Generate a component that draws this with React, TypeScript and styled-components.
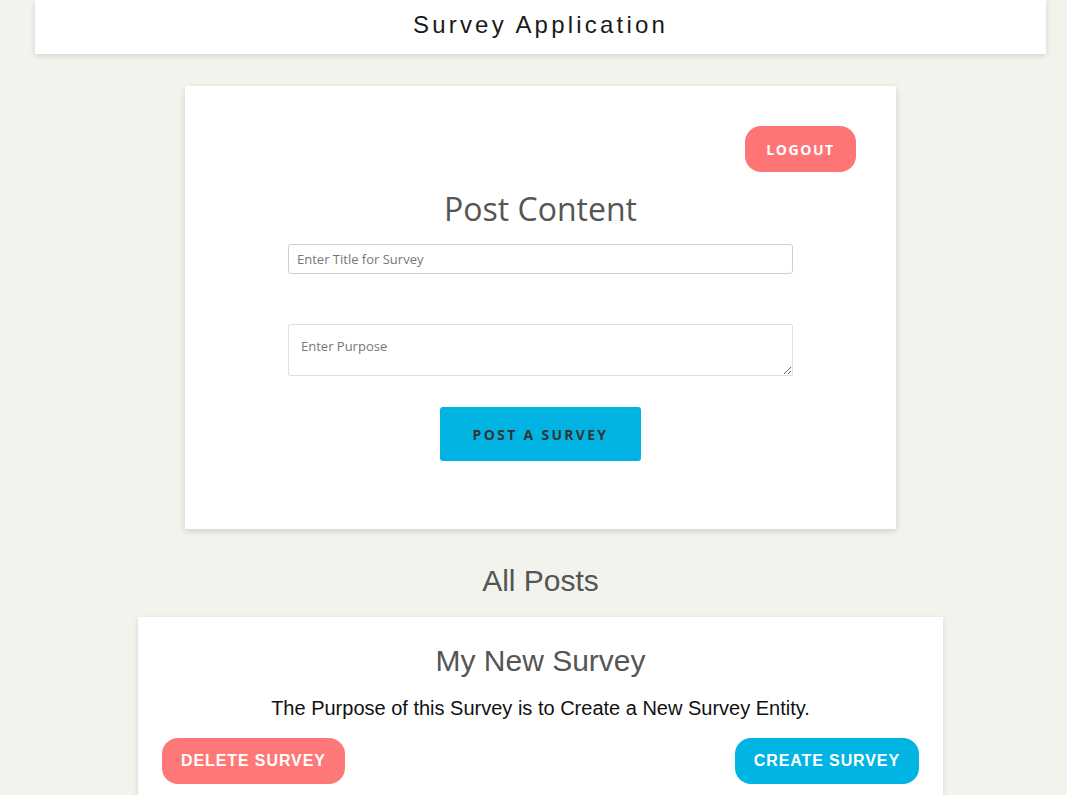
import styled, { createGlobalStyle } from 'styled-components'

const GlobalStyle = createGlobalStyle`
  html, body {
    margin: 0;
    padding: 0;
    background: #f3f3ee;
    font-family: "Liberation Sans", Arial, sans-serif;
  }
`

const Page = styled.div`
  min-height: 795px;
  padding-left: 14px;
  display: flex;
  flex-direction: column;
  align-items: center;
`

const Header = styled.header`
  width: 1011px;
  height: 54px;
  background: #fff;
  box-shadow: 0 2px 6px rgba(0, 0, 0, 0.12);
  display: flex;
  align-items: center;
  justify-content: center;
  font-size: 24px;
  letter-spacing: 3.2px;
  color: #1a1a1a;
  padding-bottom: 4px;
  box-sizing: border-box;
`

const FormCard = styled.section`
  margin-top: 32px;
  width: 711px;
  box-sizing: border-box;
  background: #fff;
  box-shadow: 0 2px 6px rgba(0, 0, 0, 0.15);
  padding: 40px 40px 68px;
  display: flex;
  flex-direction: column;
  align-items: center;
`

const TopRow = styled.div`
  width: 100%;
  display: flex;
  justify-content: flex-end;
`

const PillButton = styled.button<{ $color: string }>`
  height: 46px;
  border: none;
  border-radius: 16px;
  background: ${p => p.$color};
  color: #fff;
  font-weight: bold;
  cursor: pointer;
`

const LogoutButton = styled(PillButton)`
  width: 111px;
  font-family: "Open Sans", sans-serif;
  font-size: 14px;
  letter-spacing: 1.6px;
`

const FormTitle = styled.h2`
  margin: 16px 0 0;
  font-family: "Open Sans", sans-serif;
  font-weight: normal;
  font-size: 32px;
  line-height: 42px;
  color: #555;
`

const TitleInput = styled.input`
  margin-top: 14px;
  width: 505px;
  height: 30px;
  box-sizing: border-box;
  border: 1px solid #cfcfcf;
  border-radius: 3px;
  padding: 0 8px;
  font-family: "Open Sans", sans-serif;
  font-size: 13px;
  outline: none;
  &::placeholder { color: #777; }
`

const PurposeInput = styled.textarea`
  margin-top: 50px;
  width: 505px;
  height: 52px;
  box-sizing: border-box;
  border: 1px solid #dde0e4;
  border-radius: 2px;
  padding: 12px 12px;
  font-family: "Open Sans", sans-serif;
  font-size: 13px;
  outline: none;
  display: block;
  &::placeholder { color: #777; }
`

const PostButton = styled.button`
  margin-top: 31px;
  width: 201px;
  height: 54px;
  border: none;
  border-radius: 3px;
  background: #00b3e3;
  color: #333;
  font-family: "Open Sans", sans-serif;
  font-weight: bold;
  font-size: 14px;
  letter-spacing: 2.3px;
  cursor: pointer;
`

const SectionTitle = styled.h2`
  margin: 0;
  padding: 34px 0 18px;
  font-weight: normal;
  font-size: 30px;
  line-height: 36px;
  color: #555;
`

const PostCard = styled.article`
  width: 805px;
  box-sizing: border-box;
  background: #fff;
  box-shadow: 0 2px 6px rgba(0, 0, 0, 0.12);
  padding: 26px 24px 20px;
  display: flex;
  flex-direction: column;
  align-items: center;
`

const PostTitle = styled.h3`
  margin: 0;
  font-weight: normal;
  font-size: 30px;
  line-height: 36px;
  color: #555;
`

const PostText = styled.p`
  margin: 17px 0 0;
  font-size: 20px;
  line-height: 24px;
  color: #111;
`

const Actions = styled.div`
  margin-top: 18px;
  width: 100%;
  display: flex;
  justify-content: space-between;
`

const ActionButton = styled(PillButton)`
  padding: 0 19px;
  font-family: "Liberation Sans", Arial, sans-serif;
  font-size: 16px;
  letter-spacing: 0.9px;
`

export default function App() {
  return (
    <>
      <GlobalStyle />
      <Page>
        <Header>Survey Application</Header>
        <FormCard>
          <TopRow>
            <LogoutButton $color="#ff7575">LOGOUT</LogoutButton>
          </TopRow>
          <FormTitle>Post Content</FormTitle>
          <TitleInput placeholder="Enter Title for Survey" />
          <PurposeInput placeholder="Enter Purpose" />
          <PostButton>POST A SURVEY</PostButton>
        </FormCard>
        <SectionTitle>All Posts</SectionTitle>
        <PostCard>
          <PostTitle>My New Survey</PostTitle>
          <PostText>The Purpose of this Survey is to Create a New Survey Entity.</PostText>
          <Actions>
            <ActionButton $color="#ff7878">DELETE SURVEY</ActionButton>
            <ActionButton $color="#00b4e4">CREATE SURVEY</ActionButton>
          </Actions>
        </PostCard>
      </Page>
    </>
  )
}
